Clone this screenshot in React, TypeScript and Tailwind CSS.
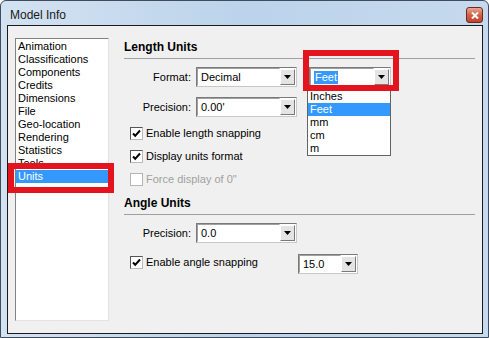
import React from "react";

const FONT = { fontFamily: '"Liberation Sans", Arial, sans-serif' };

const categories = [
  "Animation",
  "Classifications",
  "Components",
  "Credits",
  "Dimensions",
  "File",
  "Geo-location",
  "Rendering",
  "Statistics",
  "Tools",
  "Units",
];

function Arrow() {
  return (
    <svg width="7" height="4" viewBox="0 0 7 4">
      <path d="M0 0h7L3.5 4z" fill="#000" />
    </svg>
  );
}

function Combo({ value, width, highlight }: { value: string; width: string; highlight?: boolean }) {
  return (
    <div
      className={`${width} h-[20px] flex bg-white border border-t-[#7a7a7a] border-l-[#7a7a7a] border-r-[#c8c8c8] border-b-[#c8c8c8]`}
    >
      <div className="flex-1 flex items-center pl-[3px] pr-1 border border-t-[#a0a0a0] border-l-[#a0a0a0] border-r-white border-b-white">
        {highlight ? (
          <span className="bg-[#3399ff] text-white leading-[13px] px-px">{value}</span>
        ) : (
          <span className="leading-[13px]">{value}</span>
        )}
      </div>
      <div className="w-[15px] my-px mr-px flex items-center justify-center bg-[#e4e4e4] border border-t-white border-l-white border-r-[#7a7a7a] border-b-[#7a7a7a]">
        <Arrow />
      </div>
    </div>
  );
}

function Check({ label, checked, disabled }: { label: string; checked?: boolean; disabled?: boolean }) {
  return (
    <label className="flex items-center h-[13px] ml-[6px]">
      <span
        className={`w-[13px] h-[13px] flex items-center justify-center bg-white border ${
          disabled ? "border-[#b5b5b5] bg-[#f4f4f4]" : "border-t-[#555] border-l-[#555] border-r-[#bbb] border-b-[#bbb]"
        }`}
      >
        {checked && (
          <svg width="9" height="9" viewBox="0 0 9 9">
            <path d="M1 4.5l2.2 2.3L8 1.5" stroke="#000" strokeWidth="2" fill="none" />
          </svg>
        )}
      </span>
      <span className={`ml-[3px] leading-[13px] ${disabled ? "text-[#a0a0a0]" : "text-black"}`}>{label}</span>
    </label>
  );
}

function Row({ label, children }: { label: string; children: React.ReactNode }) {
  return (
    <div className="flex items-center h-[20px]">
      <span className="w-[67px] text-right leading-[13px]">{label}</span>
      <div className="ml-[5px] flex items-center">{children}</div>
    </div>
  );
}

export default function App() {
  return (
    <div
      className="relative w-[489px] h-[338px] flex flex-col border border-[#3e4c5c] rounded-t-[6px] bg-gradient-to-r from-[#d3e2f1] via-[#bcd3eb] to-[#c6d9ee] text-[11px] text-black"
      style={FONT}
    >
      {/* Title bar */}
      <div className="h-[24px] flex items-start justify-between pl-[9px] pr-[5px]">
        <span className="mt-[7px] text-[12px] leading-[14px] text-[#1a1a1a]">Model Info</span>
        <div className="mt-[6px] w-[17px] h-[16px] rounded-[3px] border border-[#6e2a1c] bg-gradient-to-b from-[#e9a592] via-[#d2614a] to-[#c1452c] flex items-center justify-center">
          <svg width="8" height="7" viewBox="0 0 8 7">
            <path d="M1 0.5l6 6M7 0.5l-6 6" stroke="#fff" strokeWidth="2" />
          </svg>
        </div>
      </div>

      {/* Client area */}
      <div className="flex-1 ml-[6px] mr-[5px] mb-[3px] border border-[#1b1b1b] bg-[#f0f0f0] flex px-[7px] pt-[12px] pb-[12px]">
        {/* Category list */}
        <div className="w-[94px] h-full bg-white border border-t-[#828282] border-l-[#828282] border-r-[#e3e3e3] border-b-[#e3e3e3] pt-[1px]">
          {categories.map((c) => (
            <div
              key={c}
              className={`h-[13px] leading-[13px] pl-[2px] ${c === "Units" ? "bg-[#3399ff] text-white" : ""}`}
            >
              {c}
            </div>
          ))}
        </div>

        {/* Settings */}
        <div className="flex-1 ml-[15px] flex flex-col">
          <div className="mt-[3px] h-[13px] leading-[13px] font-bold text-[12px]">Length Units</div>
          <div className="mt-[4px] h-px bg-[#a0a0a0]" />

          <div className="mt-[8px]">
            <Row label="Format:">
              <Combo value="Decimal" width="w-[101px]" />
              <div className="relative ml-[12px]">
                <Combo value="Feet" width="w-[82px]" highlight />
                <div className="absolute left-[-2px] top-[20px] w-[84px] bg-white border border-[#646464] pt-[2px] z-10">
                  {["Inches", "Feet", "mm", "cm", "m"].map((u) => (
                    <div
                      key={u}
                      className={`h-[13px] leading-[13px] pl-[2px] ${u === "Feet" ? "bg-[#3399ff] text-white" : ""}`}
                    >
                      {u}
                    </div>
                  ))}
                </div>
                <div className="absolute left-[-6px] top-[-17px] w-[96px] h-[41px] border-[6px] border-[#e3141e] z-20" />
              </div>
            </Row>
          </div>
          <div className="mt-[10px]">
            <Row label="Precision:">
              <Combo value="0.00'" width="w-[101px]" />
            </Row>
          </div>

          <div className="mt-[10px]">
            <Check label="Enable length snapping" checked />
          </div>
          <div className="mt-[10px]">
            <Check label="Display units format" checked />
          </div>
          <div className="mt-[10px]">
            <Check label={'Force display of 0"'} disabled />
          </div>

          <div className="mt-[11px] h-[13px] leading-[13px] font-bold text-[12px]">Angle Units</div>
          <div className="mt-[4px] h-px bg-[#a0a0a0]" />

          <div className="mt-[8px]">
            <Row label="Precision:">
              <Combo value="0.0" width="w-[101px]" />
            </Row>
          </div>
          <div className="mt-[11px] flex items-start h-[20px]">
            <div className="w-[174px] pt-[2px]">
              <Check label="Enable angle snapping" checked />
            </div>
            <Combo value="15.0" width="w-[60px]" />
          </div>
        </div>
      </div>

      {/* Annotation around the Units item */}
      <div className="absolute left-[7px] top-[162px] w-[106px] h-[30px] border-[6px] border-[#e3141e]" />
    </div>
  );
}
